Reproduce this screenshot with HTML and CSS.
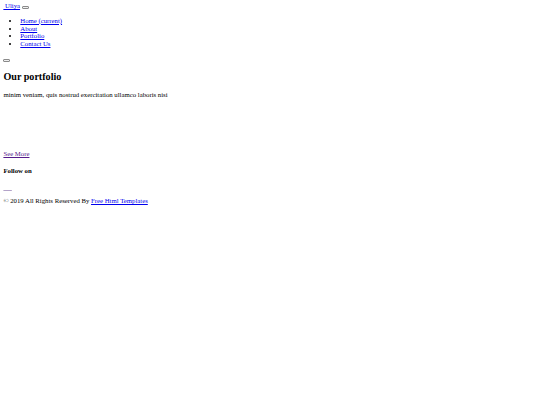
FILE: index.html
```html
<!DOCTYPE html>
<html>
<head>
<meta charset="utf-8">
<title>Uliya</title>
<link rel="stylesheet" href="styles.css">
</head>
<body class="page">
<header class="header">
  <nav class="navbar">
    <div class="brand-row"><a class="brand" href="#">&nbsp;Uliya</a><button class="btn btn-toggler" type="button"></button></div>
    <ul class="menu">
      <li><a href="#">Home (current)</a></li>
      <li><a href="#">About</a></li>
      <li><a href="#">Portfolio</a></li>
      <li><a href="#">Contact Us</a></li>
    </ul>
    <div class="search"><button class="btn" type="button"></button></div>
  </nav>
</header>
<section class="portfolio">
  <h2 class="title">Our portfolio</h2>
  <p class="lead">minim veniam, quis nostrud exercitation ullamco laboris nisi</p>
  <div class="gallery"></div>
  <a class="visited" href="#">See More</a>
</section>
<footer class="footer">
  <h4 class="follow">Follow on</h4>
  <div class="social"><a class="visited social-link" href="#">&nbsp;&nbsp;&nbsp;&nbsp;&nbsp;</a></div>
  <p class="copy">© 2019 All Rights Reserved By <a href="#">Free Html Templates</a></p>
</footer>
</body>
</html>
```
FILE: styles.css
```css
.page {
  margin: 2.4px 3.4px 3.4px;
  font-family: "Liberation Serif", "Times New Roman", serif;
  font-size: 6.75px;
  line-height: 7.76px;
  color: #000;
  background: #fff;
}
a {
  color: #0000ee;
  text-decoration-thickness: 0.5px;
}
.visited {
  color: #551a8b;
}
.social-link {
  text-decoration-color: #b3a3c9;
}
.btn {
  display: inline-block;
  width: 7px;
  height: 3px;
  margin: 0;
  padding: 0;
  border: 0.8px solid #8a8a8a;
  border-radius: 1px;
  background: #efefef;
  vertical-align: baseline;
}
.btn-toggler {
  margin-left: 1.6px;
}
.menu {
  margin: 6.75px 0;
  padding-left: 16.9px;
}
.title {
  font-size: 10.125px;
  line-height: 11.64px;
  margin: 8.4px 0;
}
.lead {
  margin: 6.75px 0;
}
.gallery {
  height: 45px;
}
.follow {
  font-size: 6.75px;
  margin: 8.4px 0;
}
.copy {
  margin: 6.75px 0;
}
```
